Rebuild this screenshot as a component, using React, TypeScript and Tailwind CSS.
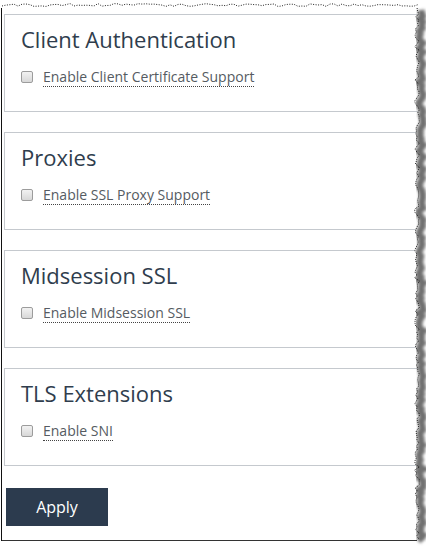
import React from 'react';

const sections = [
  { title: 'Client Authentication', label: 'Enable Client Certificate Support' },
  { title: 'Proxies', label: 'Enable SSL Proxy Support' },
  { title: 'Midsession SSL', label: 'Enable Midsession SSL' },
  { title: 'TLS Extensions', label: 'Enable SNI' },
];

// deterministic jitter for the torn paper edges
const jitter = (i: number, amp: number) => {
  const v = Math.sin(i * 12.9898 + 78.233) * 43758.5453;
  return (v - Math.floor(v) - 0.5) * amp;
};

const rightEdge = (): [number, number][] => {
  const pts: [number, number][] = [];
  for (let y = 8; y <= 540; y += 3) pts.push([+(417 + jitter(y, 5)).toFixed(1), y]);
  return pts;
};

const topEdge = (): [number, number][] => {
  const pts: [number, number][] = [];
  for (let x = 2; x <= 418; x += 4) pts.push([x, +(5 + jitter(x + 3, 3)).toFixed(1)]);
  return pts;
};

const TornFrame = () => {
  const right = rightEdge();
  const top = topEdge();
  const rightStr = right.map(([x, y]) => `${x},${y}`).join(' ');
  const shadowStr = right.map(([x, y]) => `${x + 4},${y + 2}`).join(' ');
  return (
    <svg className="pointer-events-none absolute inset-0" width="431" height="548" viewBox="0 0 431 548">
      <defs>
        <filter id="blur" x="-50%" y="-5%" width="200%" height="110%">
          <feGaussianBlur stdDeviation="1.4" />
        </filter>
      </defs>
      {/* white outside the paper */}
      <polygon points={`${rightStr} 431,548 431,0 420,0`} fill="white" />
      <rect x="0" y="541" width="431" height="7" fill="white" />
      {/* shadows */}
      <polyline points={shadowStr} fill="none" stroke="#707070" strokeWidth="7" filter="url(#blur)" />
      <line x1="12" y1="543.5" x2="420" y2="543.5" stroke="#707070" strokeWidth="5" filter="url(#blur)" />
      {/* edges */}
      <polyline points={rightStr} fill="none" stroke="#222" strokeWidth="1" strokeDasharray="1 1" />
      <polyline points={top.map(([x, y]) => `${x},${y}`).join(' ')} fill="none" stroke="#222" strokeWidth="1" strokeDasharray="1 1.5" />
      <rect x="1" y="8" width="1" height="533" fill="#111" />
      <line x1="2" y1="540.5" x2="417" y2="540.5" stroke="#333" strokeWidth="1" />
    </svg>
  );
};

const Section = ({ title, label }: { title: string; label: string }) => (
  <div className="h-[98px] w-[440px] border border-[#c5c9ce] bg-white pl-[16px] pt-[9px]">
    <h2 className="text-[22px] leading-[30px] text-[#2f3d4d]">{title}</h2>
    <label className="mt-[13px] flex items-center gap-[10px]">
      <span className="h-[12px] w-[12px] rounded-[2px] border border-[#9c9c9c] bg-gradient-to-b from-[#f2f2f2] to-[#d8d8d8]" />
      <span className="border-b border-dotted border-[#444] text-[14px] leading-[19px] text-[#555b62]">{label}</span>
    </label>
  </div>
);

export default function App() {
  return (
    <div
      className="relative h-[548px] w-[431px] overflow-hidden bg-white"
      style={{ fontFamily: '"Open Sans", "Liberation Sans", sans-serif' }}
    >
      <div className="flex flex-col gap-[20px] pl-[4px] pt-[14px]">
        {sections.map((s) => (
          <Section key={s.title} {...s} />
        ))}
      </div>
      <div className="pl-[6px] pt-[22px]">
        <button className="h-[38px] w-[102px] bg-[#2c3b4e] text-[16px] text-white">Apply</button>
      </div>
      <TornFrame />
    </div>
  );
}
